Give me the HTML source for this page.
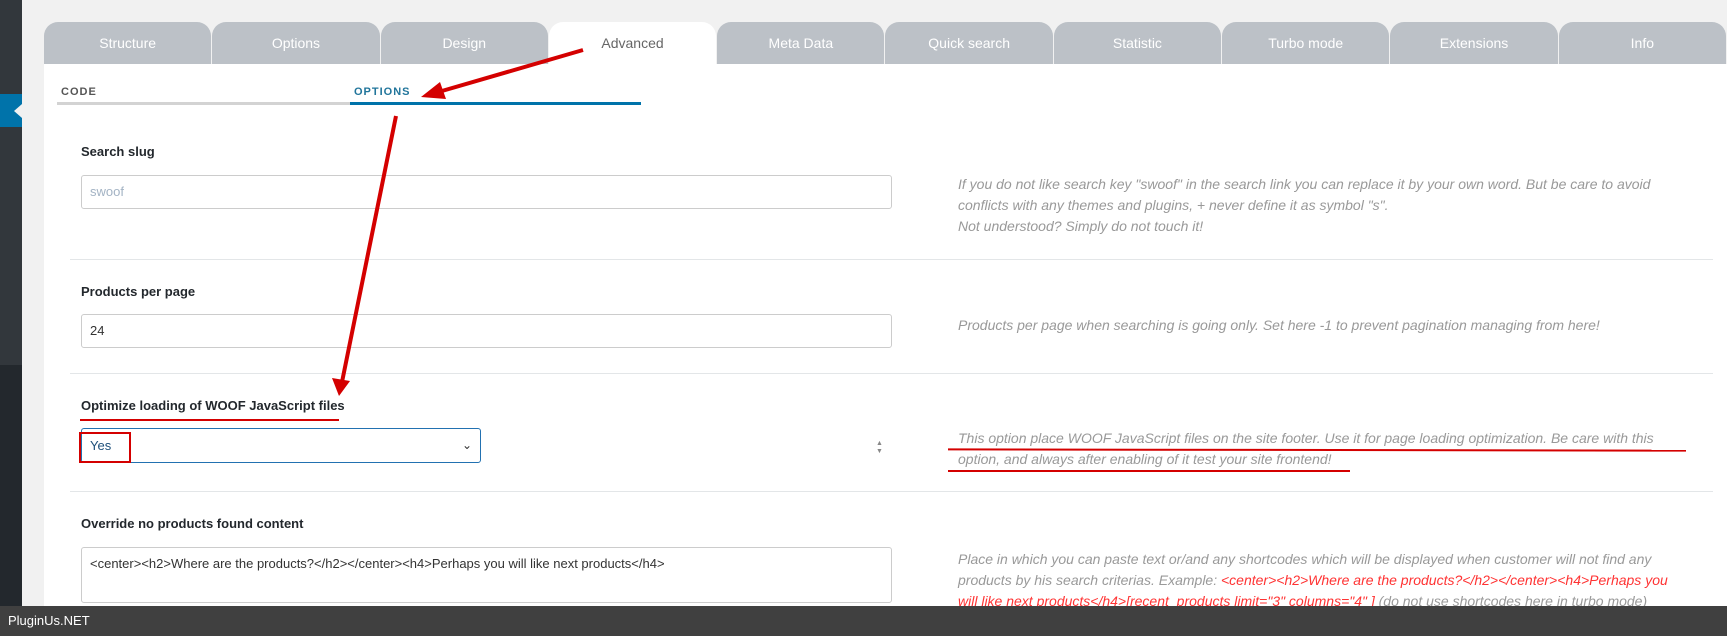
<!DOCTYPE html>
<html><head><meta charset="utf-8"><style>
*{box-sizing:border-box;margin:0;padding:0}
body{width:1727px;height:636px;overflow:hidden;background:#f1f1f1;font-family:"Liberation Sans",sans-serif;position:relative}
.abs{position:absolute}
.side{left:0;top:0;width:22px;height:365px;background:#32373c}
.side2{left:0;top:365px;width:22px;height:271px;background:#23282d}
.sideblue{left:0;top:94px;width:22px;height:33px;background:#0073aa}
.content{left:44px;top:64px;right:0;bottom:0;background:#fff}
.tabs{left:44px;top:22px;width:1683px;height:42px;display:flex}
.tab{flex:1;background:#bcc1c7;color:#fff;font-size:14px;text-align:center;line-height:42px;border-radius:14px 14px 0 0;margin-right:1px}
.tab.act{background:#fff;color:#666}
.sub{font-size:11px;font-weight:bold;letter-spacing:1px;top:86px}
.lbl{left:81px;font-size:13px;font-weight:bold;color:#23282d}
.inp{left:81px;width:811px;border:1px solid #ccc;border-radius:3px;background:#fff;font-size:13px;color:#333;padding-left:8px}
.desc{left:958px;width:740px;font-size:14px;font-style:italic;color:#999;line-height:21px}
.sep{left:70px;width:1643px;height:1px;background:#e3e6e8}
.red{background:#d40000}
</style></head><body>
<div class="abs side"></div><div class="abs side2"></div><div class="abs sideblue"></div>
<div class="abs" style="left:14px;top:104px;width:0;height:0;border-top:7px solid transparent;border-bottom:7px solid transparent;border-right:8px solid #f1f1f1"></div>
<div class="abs content"></div>
<div class="abs tabs">
<div class="tab">Structure</div><div class="tab">Options</div><div class="tab">Design</div><div class="tab act">Advanced</div><div class="tab">Meta Data</div><div class="tab">Quick search</div><div class="tab">Statistic</div><div class="tab">Turbo mode</div><div class="tab">Extensions</div><div class="tab">Info</div>
</div>
<div class="abs sub" style="left:61px;color:#555">CODE</div>
<div class="abs sub" style="left:354px;color:#21759b">OPTIONS</div>
<div class="abs" style="left:57px;top:102px;width:293px;height:3px;background:#d3d3d3"></div>
<div class="abs" style="left:350px;top:102px;width:291px;height:3px;background:#0073aa"></div>

<div class="abs lbl" style="top:144px">Search slug</div>
<div class="abs inp" style="top:175px;height:34px;line-height:32px;color:#a3b3c4">swoof</div>
<div class="abs desc" style="top:174px">If you do not like search key "swoof" in the search link you can replace it by your own word. But be care to avoid conflicts with any themes and plugins, + never define it as symbol "s".<br>Not understood? Simply do not touch it!</div>
<div class="abs sep" style="top:259px"></div>

<div class="abs lbl" style="top:284px">Products per page</div>
<div class="abs inp" style="top:314px;height:34px;line-height:32px">24</div>
<div class="abs desc" style="top:315px">Products per page when searching is going only. Set here -1 to prevent pagination managing from here!</div>
<div class="abs sep" style="top:373px"></div>

<div class="abs lbl" style="top:398px">Optimize loading of WOOF JavaScript files</div>
<div class="abs red" style="left:80px;top:419px;width:259px;height:2px"></div>
<div class="abs inp" style="top:428px;width:400px;height:35px;line-height:33px;border-color:#2271b1;color:#1d4f7a">Yes<span style="position:absolute;right:8px;top:0;color:#333;font-size:12px">&#8964;</span></div>
<div class="abs" style="left:79px;top:432px;width:52px;height:31px;border:2px solid #d40000"></div>
<div class="abs" style="left:876px;top:440px;font-size:7px;color:#888;line-height:8px">▲<br>▼</div>
<div class="abs desc" style="top:428px">This option place WOOF JavaScript files on the site footer. Use it for page loading optimization. Be care with this option, and always after enabling of it test your site frontend!</div>
<div class="abs red" style="left:948px;top:449px;width:738px;height:2px;transform:rotate(0.1deg)"></div>
<div class="abs red" style="left:948px;top:470px;width:402px;height:2px"></div>
<div class="abs sep" style="top:491px"></div>

<div class="abs lbl" style="top:516px">Override no products found content</div>
<div class="abs inp" style="top:547px;height:56px;padding-top:8px;font-size:13px">&lt;center&gt;&lt;h2&gt;Where are the products?&lt;/h2&gt;&lt;/center&gt;&lt;h4&gt;Perhaps you will like next products&lt;/h4&gt;</div>
<div class="abs desc" style="top:549px;width:712px">Place in which you can paste text or/and any shortcodes which will be displayed when customer will not find any products by his search criterias. Example: <span style="color:#f33">&lt;center&gt;&lt;h2&gt;Where are the products?&lt;/h2&gt;&lt;/center&gt;&lt;h4&gt;Perhaps you will like next products&lt;/h4&gt;[recent_products limit="3" columns="4" ]</span> (do not use shortcodes here in turbo mode)</div>

<svg class="abs" style="left:0;top:0" width="1727" height="636">
<line x1="583" y1="50" x2="435" y2="93" stroke="#d40000" stroke-width="4"/>
<polygon points="421,97 440,82 446,99" fill="#d40000"/>
<line x1="396" y1="116" x2="342" y2="382" stroke="#d40000" stroke-width="4"/>
<polygon points="339,396 332,378 350,381" fill="#d40000"/>
</svg>
<div class="abs" style="left:0;top:606px;width:1727px;height:30px;background:#404040;color:#fff;font-size:13px;line-height:30px;padding-left:8px">PluginUs.NET</div>
</body></html>
